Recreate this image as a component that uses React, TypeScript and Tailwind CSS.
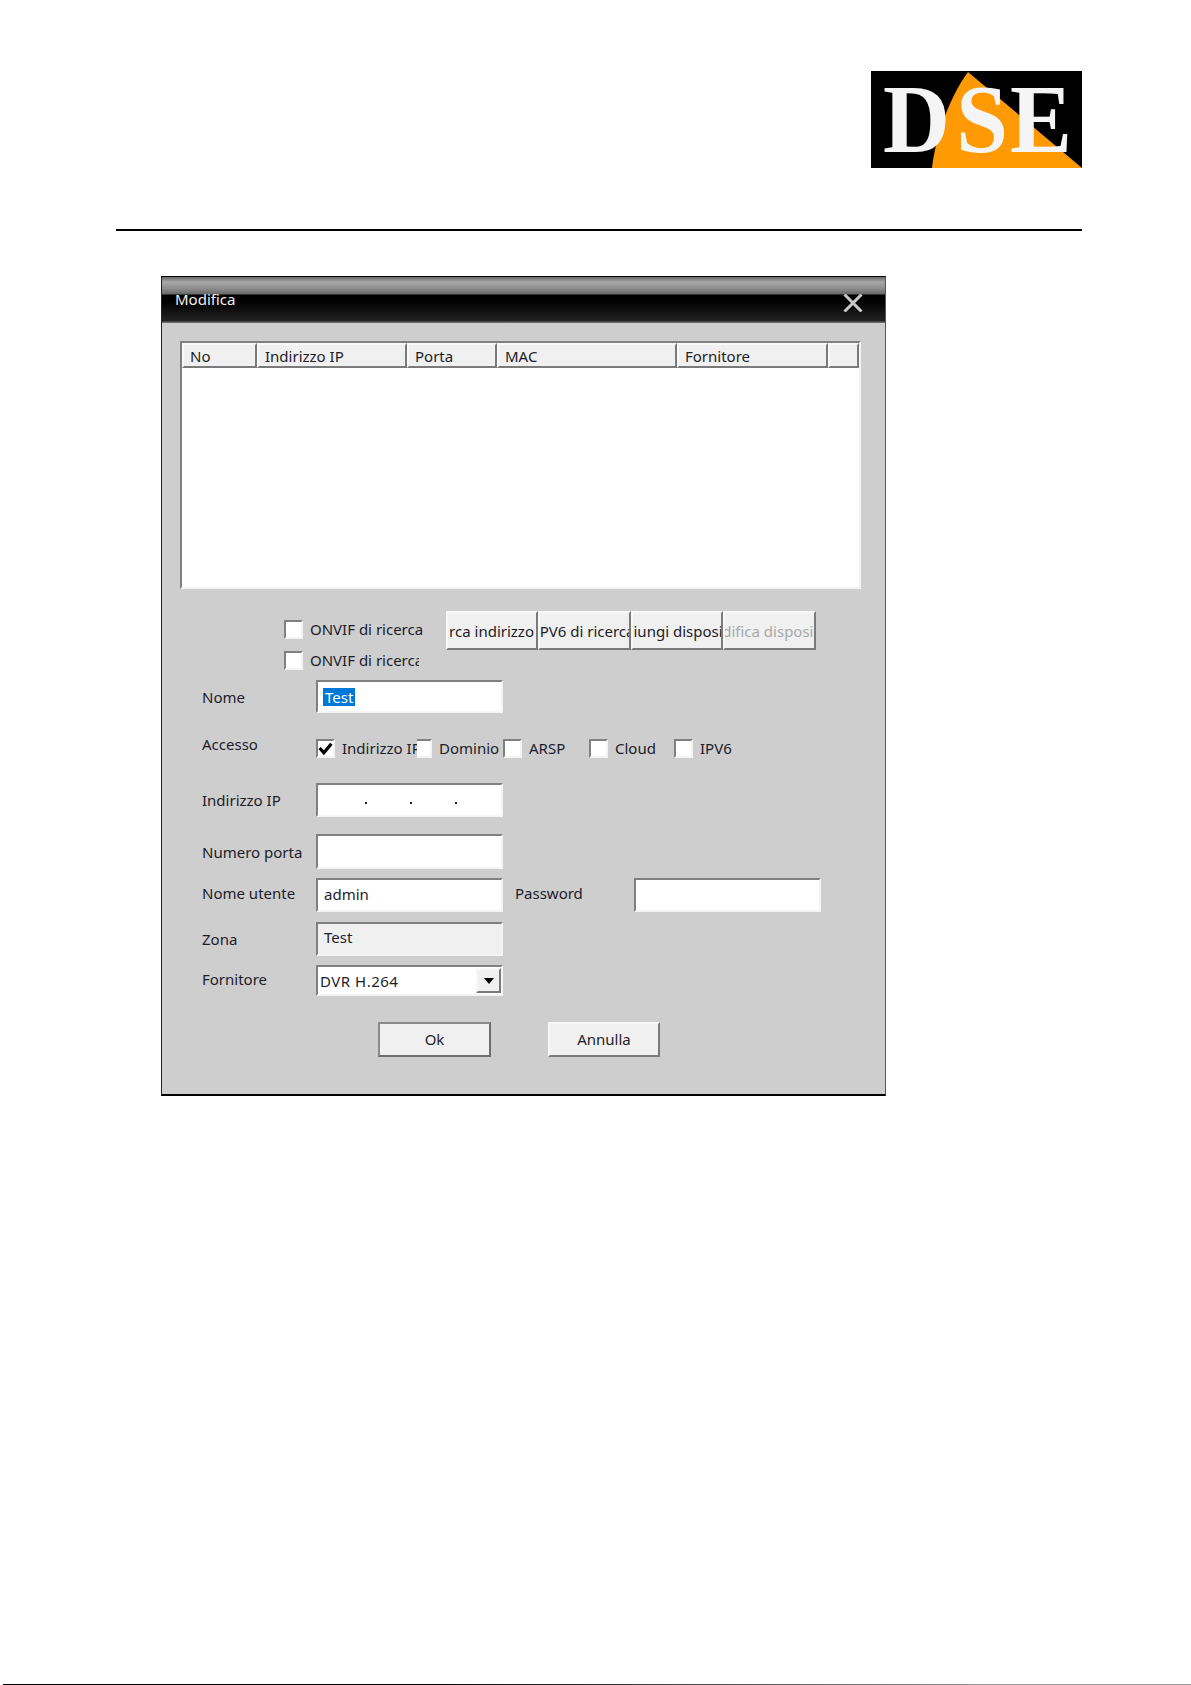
import React from 'react';

const sunken = 'border-2 border-t-[#808080] border-l-[#808080] border-b-[#f4f4f4] border-r-[#f4f4f4]';
const raised = 'border-2 border-t-[#f8f8f8] border-l-[#f8f8f8] border-b-[#7a7a7a] border-r-[#7a7a7a] bg-[#f0f0f0]';

const Logo = () => (
  <svg viewBox="0 0 211 97" className="w-[211px] h-[97px] block">
    <rect width="211" height="97" fill="#000" />
    <path d="M97 1 L211 97 L61 97 C64 70 76 30 97 1 Z" fill="#ff9a05" />
    <g fill="#f5f5f5" fontFamily="'Liberation Serif', serif" fontWeight="700" fontSize="98">
      <text x="12" y="81" textLength="67" lengthAdjust="spacingAndGlyphs">D</text>
      <text x="85" y="81" textLength="52" lengthAdjust="spacingAndGlyphs">S</text>
      <text x="139" y="81" textLength="62" lengthAdjust="spacingAndGlyphs">E</text>
    </g>
  </svg>
);

const Check = ({ checked = false }: { checked?: boolean }) => (
  <span className={`${sunken} w-[19px] h-[19px] bg-white shrink-0 flex items-center justify-center`}>
    {checked && (
      <svg viewBox="0 0 14 14" className="w-[15px] h-[15px]">
        <path d="M1.5 6.5 L5.5 11 L12.5 2.5" fill="none" stroke="#000" strokeWidth="3" />
      </svg>
    )}
  </span>
);

const CheckLabel = ({ label, width, checked }: { label: string; width: string; checked?: boolean }) => (
  <div className={`flex items-center ${width}`}>
    <Check checked={checked} />
    <span className="ml-[7px] overflow-hidden whitespace-nowrap">{label}</span>
  </div>
);

const ToolButton = ({ label, width, disabled, end }: { label: string; width: string; disabled?: boolean; end?: boolean }) => (
  <div className={`${raised} ${width} h-[39px] ${end ? 'px-[2px]' : ''} ${disabled ? 'text-[#a8a8a8]' : ''}`}>
    <div className={`h-full overflow-hidden whitespace-nowrap flex items-center ${end ? 'justify-end' : 'justify-center'}`}>
      <span>{label}</span>
    </div>
  </div>
);

const Row = ({ label, className, children }: { label: string; className: string; children?: React.ReactNode }) => (
  <div className={`flex ${className}`}>
    <span className="w-[114px] shrink-0">{label}</span>
    {children}
  </div>
);

const columns = [
  { label: 'No', width: 'w-[75px]' },
  { label: 'Indirizzo IP', width: 'w-[150px]' },
  { label: 'Porta', width: 'w-[90px]' },
  { label: 'MAC', width: 'w-[180px]' },
  { label: 'Fornitore', width: 'w-[151px]' },
  { label: '', width: 'w-[31px]' },
];

export default function App() {
  return (
    <div className="h-[1685px] flex flex-col bg-white text-[15px] leading-[20px] text-[#1c1c2a] font-['Noto_Sans',sans-serif]">
      <div className="pt-[71px] pl-[116px] pr-[109px]">
        <div className="flex justify-end">
          <Logo />
        </div>
        <div className="mt-[61px] h-[2px] bg-black" />

        <div className="mt-[45px] ml-[45px] w-[725px] h-[820px] bg-[#cecece] border border-t-black border-l-[#222] border-r-[#555] border-b-black border-b-2">
          <div className="h-[46px] bg-[linear-gradient(180deg,#666_0px,#a8a8a8_5px,#8a8a8a_12px,#6a6a6a_17px,#000_18px,#000_24px,#222_44px,#6a6a6a_45px)] pl-[13px] pr-[22px] flex justify-between items-start text-[#f0f0f0]">
            <span className="mt-[12px]">Modifica</span>
            <svg viewBox="0 0 20 18" className="w-[20px] h-[18px] mt-[17px]">
              <path d="M1.5 0.5 L18.5 17.5 M18.5 0.5 L1.5 17.5" stroke="#c8c8c8" strokeWidth="3" />
            </svg>
          </div>

          <div className={`${sunken} ml-[18px] mt-[18px] w-[681px] h-[248px] bg-white`}>
            <div className="flex h-[25px]">
              {columns.map((col) => (
                <div key={col.label} className={`${raised} ${col.width} shrink-0 pl-[6px] flex items-center whitespace-nowrap`}>
                  {col.label}
                </div>
              ))}
            </div>
          </div>

          <div className="flex mt-[22px] ml-[122px]">
            <div className="w-[162px] pt-[8px]">
              <CheckLabel label="ONVIF di ricerca" width="w-[142px]" />
              <CheckLabel label="ONVIF di ricerca" width="w-[135px] mt-[11px]" />
            </div>
            <ToolButton label="Ricerca indirizzo" width="w-[92px]" end />
            <ToolButton label="IPV6 di ricerca" width="w-[93px]" />
            <ToolButton label="Aggiungi dispositivo" width="w-[92px]" />
            <ToolButton label="Modifica dispositivo" width="w-[93px]" disabled />
          </div>

          <div className="ml-[40px]">
            <Row label="Nome" className="items-center mt-[10px]">
              <div className={`${sunken} w-[187px] h-[33px] bg-white pl-[5px] flex items-center`}>
                <span className="bg-[#0078d7] text-white px-[2px] leading-[18px]">Test</span>
              </div>
            </Row>

            <Row label="Accesso" className="items-start mt-[21px] h-[24px]">
              <div className="flex items-center mt-[4px]">
                <CheckLabel label="Indirizzo IP" width="w-[101px] -mr-[4px] relative z-10 bg-[#cecece]" checked />
                <CheckLabel label="Dominio" width="w-[90px]" />
                <CheckLabel label="ARSP" width="w-[86px]" />
                <CheckLabel label="Cloud" width="w-[85px]" />
                <CheckLabel label="IPV6" width="w-[70px]" />
              </div>
            </Row>

            <Row label="Indirizzo IP" className="items-center mt-[25px]">
              <div className={`${sunken} w-[187px] h-[34px] bg-white pl-[47px] pb-[2px] flex items-center gap-[43px]`}>
                <span className="w-[2px] h-[2px] mt-[8px] bg-[#1c1c2a]" />
                <span className="w-[2px] h-[2px] mt-[8px] bg-[#1c1c2a]" />
                <span className="w-[2px] h-[2px] mt-[8px] bg-[#1c1c2a]" />
              </div>
            </Row>

            <Row label="Numero porta" className="items-center mt-[17px]">
              <div className={`${sunken} w-[187px] h-[35px] bg-white`} />
            </Row>

            <Row label="Nome utente" className="items-center mt-[9px] [&>span]:pb-[4px]">
              <div className={`${sunken} w-[187px] h-[34px] bg-white pl-[6px] pb-[3px] flex items-center`}>admin</div>
              <span className="ml-[12px] w-[119px]">Password</span>
              <div className={`${sunken} w-[187px] h-[34px] bg-white`} />
            </Row>

            <Row label="Zona" className="items-center mt-[10px]">
              <div className={`${sunken} w-[187px] h-[34px] bg-[#f0f0f0] pl-[6px] pb-[4px] flex items-center`}>Test</div>
            </Row>

            <Row label="Fornitore" className="items-center mt-[9px] [&>span]:pb-[3px]">
              <div className={`${sunken} w-[187px] h-[31px] bg-white pl-[2px] flex items-center justify-between`}>
                <span className="tracking-[0.5px]">DVR H.264</span>
                <span className={`${raised} w-[25px] h-[25px] flex items-center justify-center`}>
                  <svg viewBox="0 0 10 6" className="w-[10px] h-[6px]">
                    <path d="M0 0 H10 L5 6 Z" fill="#000" />
                  </svg>
                </span>
              </div>
            </Row>

            <div className="flex mt-[26px] ml-[176px]">
              <div className="border-2 border-t-[#8a8a8a] border-l-[#8a8a8a] border-b-[#6e6e6e] border-r-[#6e6e6e] bg-[#f0f0f0] w-[113px] h-[35px] pb-[2px] flex items-center justify-center">Ok</div>
              <div className={`${raised} ml-[57px] w-[112px] h-[35px] pb-[2px] flex items-center justify-center`}>Annulla</div>
            </div>
          </div>
        </div>
      </div>

      <div className="mt-auto ml-[3px] h-px bg-[linear-gradient(90deg,#000_35%,#999_84%)]" />
    </div>
  );
}
